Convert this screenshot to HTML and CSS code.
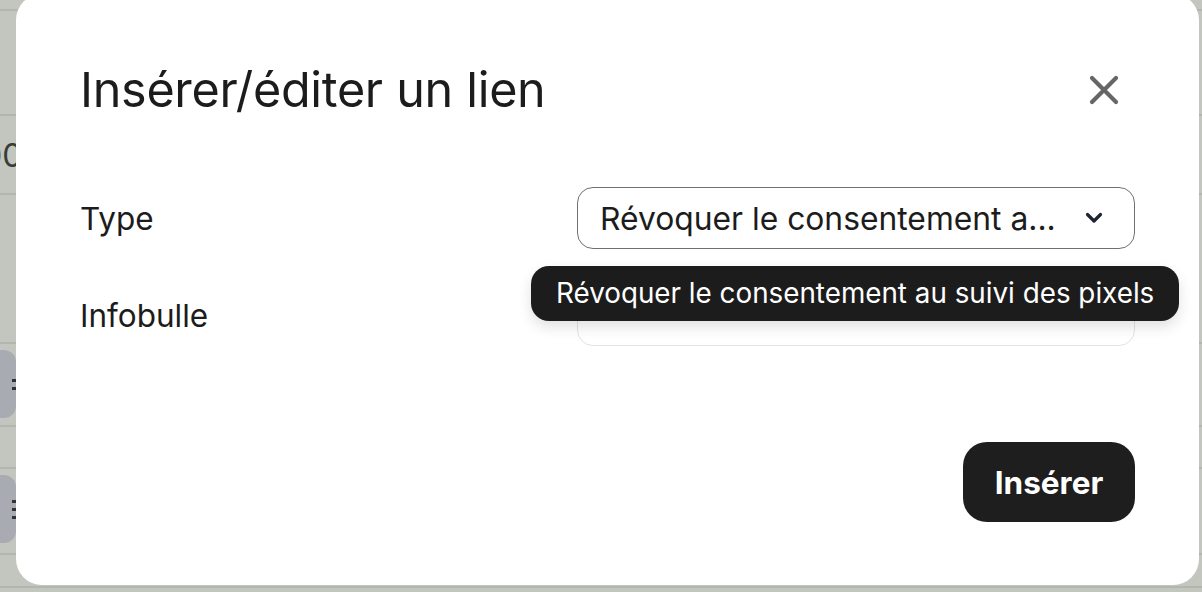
FILE: index.html
```html
<!DOCTYPE html>
<html lang="fr">
<head>
  <meta charset="UTF-8" />
  <meta name="viewport" content="width=device-width, initial-scale=1.0"/>
  <title>Insérer/éditer un lien</title>
  <link rel="stylesheet" href="styles.css">
</head>
<body>
  <!-- page behind the overlay -->
  <div class="page">
    <div class="row r1"></div>
    <div class="row r2"></div>
    <div class="row r3"><span class="cell-text">00</span></div>
    <div class="row r4"></div>
    <div class="row r5"><span class="tag"><i></i><i></i></span></div>
    <div class="row r6"></div>
    <div class="row r7"><span class="tag"><i></i><i></i><i></i></span></div>
    <div class="row r8"></div>
  </div>

  <div class="modal" role="dialog" aria-labelledby="modal-title">
    <div class="modal-header">
      <h1 id="modal-title">Insérer/éditer un lien</h1>
      <button class="close" aria-label="Fermer">
        <svg width="30" height="30" viewBox="0 0 30 30" fill="none" stroke="#666" stroke-width="4.2" stroke-linecap="round">
          <path d="M3 3 L27 27 M27 3 L3 27"/>
        </svg>
      </button>
    </div>

    <div class="form">
      <label for="type">Type</label>
      <div class="field">
        <div class="select" id="type">
          <span class="select-value">Révoquer le consentement a...</span>
          <svg class="chevron" width="20" height="14" viewBox="0 0 20 14" fill="none" stroke="#1f2433" stroke-width="3.2" stroke-linecap="round" stroke-linejoin="round">
            <path d="M3.5 3.5 L10 10 L16.5 3.5"/>
          </svg>
        </div>
        <div class="tooltip">Révoquer le consentement au suivi des pixels</div>
      </div>

      <label for="infobulle">Infobulle</label>
      <div class="field">
        <input type="text" id="infobulle" class="input" />
      </div>
    </div>

    <div class="modal-footer">
      <button class="btn-primary">Insérer</button>
    </div>
  </div>
</body>
</html>
```

FILE: styles.css
```css
html, body {
  margin: 0;
  padding: 0;
}
body {
  font-family: Inter, 'Noto Sans', sans-serif;
  background: #c3c6be;
  color: #1c1c1c;
  width: 1202px;
  height: 592px;
  overflow: hidden;
  position: relative;
}

/* background list */
.page {
  display: flex;
  flex-direction: column;
}
.row {
  border-bottom: 2px solid #b3b6ae;
  position: relative;
}
.r1 { height: 9px; }
.r2 { height: 103px; }
.r3 { height: 77px; }
.r4 { height: 147px; }
.r5 { height: 81px; }
.r6 { height: 40px; }
.r7 { height: 84px; }
.r8 { height: 31px; }
.cell-text {
  position: absolute;
  left: -18px;
  top: 20px;
  font-size: 32px;
  color: #3a3c38;
}
.tag {
  position: absolute;
  left: -20px;
  top: 6px;
  width: 36px;
  height: 68px;
  border-radius: 12px;
  background: #a9abb3;
  display: flex;
  flex-direction: column;
  justify-content: center;
  align-items: flex-end;
  gap: 5px;
}
.tag i {
  display: block;
  width: 4px;
  height: 3px;
  background: #333;
}

/* dialog */
.modal {
  position: absolute;
  left: 16px;
  top: -6px;
  width: 1183px;
  height: 591px;
  background: #fff;
  border-radius: 26px;
  box-sizing: border-box;
  padding: 68px 64px 0 64px;
}
.modal-header {
  display: flex;
  justify-content: space-between;
  align-items: center;
  height: 56px;
}
.modal-header h1 {
  margin: 0;
  font-size: 48.5px;
  font-weight: 400;
  letter-spacing: -0.3px;
  line-height: 56px;
  color: #1c1c1c;
}
.close {
  background: none;
  border: none;
  padding: 0;
  margin-right: 16px;
  width: 30px;
  height: 30px;
  cursor: pointer;
}
.close svg {
  display: block;
}

.form {
  display: grid;
  grid-template-columns: 1fr 558px;
  row-gap: 35px;
  align-items: center;
  margin-top: 69px;
}
.form label {
  font-size: 31.5px;
  color: #1c1c1c;
}
.field {
  position: relative;
}
.select {
  height: 62px;
  box-sizing: border-box;
  border: 1.5px solid #707070;
  border-radius: 16px;
  display: flex;
  align-items: center;
  justify-content: space-between;
  padding: 0 30px 0 22px;
}
.select-value {
  font-size: 31.8px;
  color: #1c1c1c;
}
.chevron {
  display: block;
}
.input {
  display: block;
  width: 100%;
  height: 62px;
  box-sizing: border-box;
  border: 1.5px solid #e3e3e3;
  border-radius: 16px;
  font: inherit;
}

.tooltip {
  position: absolute;
  top: 79px;
  left: -46px;
  z-index: 2;
  height: 55px;
  line-height: 55px;
  padding: 0 25px;
  background: #1c1c1c;
  color: #fff;
  border-radius: 18px;
  font-size: 27.8px;
  white-space: nowrap;
  box-shadow: 0 6px 14px rgba(0, 0, 0, 0.12);
}

.modal-footer {
  display: flex;
  justify-content: flex-end;
  margin-top: 96px;
}
.btn-primary {
  background: #1e1e1e;
  color: #fff;
  border: none;
  border-radius: 24px;
  height: 80px;
  width: 172px;
  padding: 0;
  font-family: inherit;
  font-size: 31.5px;
  font-weight: 700;
  cursor: pointer;
}
```
